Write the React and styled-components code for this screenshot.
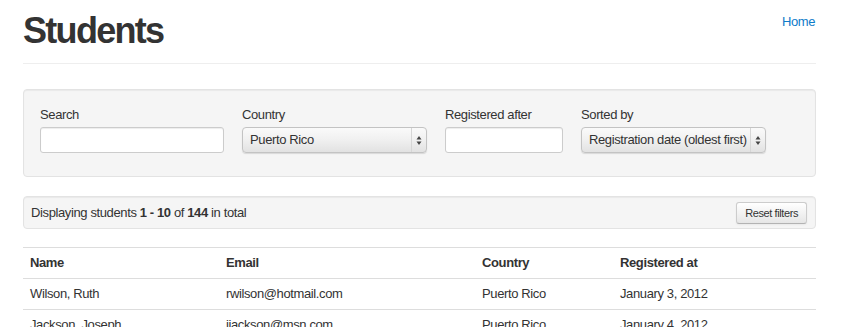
import React from 'react';
import styled, { createGlobalStyle } from 'styled-components';

const GlobalStyle = createGlobalStyle`
  body {
    margin: 0;
    background: #fff;
    font-family: "Liberation Sans", Arial, sans-serif;
    font-size: 13px;
    line-height: 18px;
    letter-spacing: -0.38px;
    color: #333;
  }
`;

const Container = styled.div`
  width: 793px;
  margin: 0 26px 0 23px;
`;

const PageHeader = styled.div`
  display: flex;
  justify-content: space-between;
  align-items: flex-start;
  border-bottom: 1px solid #eee;
  height: 64px;
  box-sizing: border-box;
`;

const Title = styled.h1`
  margin: 11px 0 0;
  font-size: 36px;
  line-height: 40px;
  font-weight: bold;
  letter-spacing: -1.7px;
  color: #333;
`;

const NavLink = styled.a`
  margin-top: 13px;
  color: #0f7bc9;
  text-decoration: none;
  letter-spacing: -0.4px;
  margin-right: 1px;
`;

const Well = styled.div`
  background: #f5f5f5;
  border: 1px solid #e3e3e3;
  border-radius: 4px;
  box-shadow: inset 0 1px 1px rgba(0, 0, 0, 0.05);
  box-sizing: border-box;
`;

const FilterWell = styled(Well)`
  margin-top: 25px;
  height: 88px;
  padding: 16px 16px 0;
  display: flex;
  gap: 18px;
`;

const Field = styled.div`
  display: flex;
  flex-direction: column;
  width: ${p => p.$width}px;
`;

const Label = styled.label`
  margin-bottom: 3px;
`;

const TextInput = styled.input`
  height: 26px;
  box-sizing: border-box;
  border: 1px solid #ccc;
  border-radius: 3px;
  background: #fff;
  box-shadow: inset 0 1px 1px rgba(0, 0, 0, 0.075);
  font: inherit;
  padding: 4px 6px;
`;

const SelectBox = styled.div`
  height: 26px;
  box-sizing: border-box;
  display: flex;
  align-items: stretch;
  border: 1px solid #c3c3c3;
  border-radius: 4px;
  background: linear-gradient(#fafafa, #f0f0f0 50%, #e2e2e2);
  box-shadow: 0 1px 1px rgba(0, 0, 0, 0.12);
`;

const SelectText = styled.span`
  flex: 1;
  padding: 0 7px;
  line-height: 24px;
  white-space: nowrap;
  overflow: hidden;
`;

const SelectArrows = styled.span`
  width: 14px;
  border-left: 1px solid #d6d6d6;
  display: flex;
  align-items: center;
  justify-content: center;
`;

const StatusWell = styled(Well)`
  margin-top: 19px;
  height: 33px;
  padding: 0 8px 0 7px;
  display: flex;
  align-items: center;
  justify-content: space-between;
`;

const Button = styled.button`
  height: 22px;
  padding: 0 8px;
  font-family: inherit;
  font-size: 11px;
  letter-spacing: -0.4px;
  color: #333;
  border: 1px solid #ccc;
  border-bottom-color: #b3b3b3;
  border-radius: 3px;
  background: linear-gradient(#fff, #e6e6e6);
  box-shadow: 0 1px 2px rgba(0, 0, 0, 0.05);
`;

const Table = styled.table`
  margin-top: 18px;
  width: 100%;
  table-layout: fixed;
  border-collapse: collapse;
  border-top: 1px solid #ddd;
`;

const Cell = styled.td`
  box-sizing: border-box;
  width: ${p => (p.$width ? `${p.$width}px` : 'auto')};
  padding: 6px 7px;
  line-height: 18px;
  text-align: left;
  border-bottom: 1px solid #ddd;
  font-weight: ${p => (p.$head ? 'bold' : 'normal')};
  vertical-align: top;
  white-space: nowrap;
`;

const Arrows = () => (
  <svg width="6" height="11" viewBox="0 0 6 11">
    <path d="M0.5 4.5 L3 1 L5.5 4.5 Z" fill="#444" />
    <path d="M0.5 6.5 L3 10 L5.5 6.5 Z" fill="#444" />
  </svg>
);

const Select = ({ value }) => (
  <SelectBox>
    <SelectText>{value}</SelectText>
    <SelectArrows>
      <Arrows />
    </SelectArrows>
  </SelectBox>
);

const columns = [
  { title: 'Name', width: 196 },
  { title: 'Email', width: 256 },
  { title: 'Country', width: 138 },
  { title: 'Registered at' },
];

const students = [
  ['Wilson, Ruth', 'rwilson@hotmail.com', 'Puerto Rico', 'January 3, 2012'],
  ['Jackson, Joseph', 'jjackson@msn.com', 'Puerto Rico', 'January 4, 2012'],
];

export default function App() {
  return (
    <Container>
      <GlobalStyle />
      <PageHeader>
        <Title>Students</Title>
        <NavLink href="#">Home</NavLink>
      </PageHeader>

      <FilterWell>
        <Field $width={184}>
          <Label>Search</Label>
          <TextInput />
        </Field>
        <Field $width={185}>
          <Label>Country</Label>
          <Select value="Puerto Rico" />
        </Field>
        <Field $width={118}>
          <Label>Registered after</Label>
          <TextInput />
        </Field>
        <Field $width={185}>
          <Label>Sorted by</Label>
          <Select value="Registration date (oldest first)" />
        </Field>
      </FilterWell>

      <StatusWell>
        <span>
          Displaying students <b>1&nbsp;-&nbsp;10</b> of <b>144</b> in total
        </span>
        <Button>Reset filters</Button>
      </StatusWell>

      <Table>
        <thead>
          <tr>
            {columns.map(c => (
              <Cell as="th" key={c.title} $head $width={c.width}>
                {c.title}
              </Cell>
            ))}
          </tr>
        </thead>
        <tbody>
          {students.map(row => (
            <tr key={row[0]}>
              {row.map((v, i) => (
                <Cell key={i}>{v}</Cell>
              ))}
            </tr>
          ))}
        </tbody>
      </Table>
    </Container>
  );
}
